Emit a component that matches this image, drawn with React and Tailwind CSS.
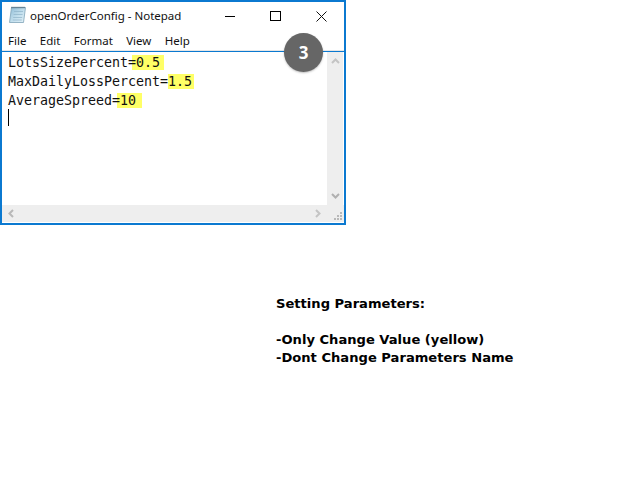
export default function App() {
  const mono = "font-['DejaVu_Sans_Mono',monospace] text-[13.3px] leading-[19px] text-[#111] h-[19px] whitespace-pre";
  return (
    <div className="relative w-[640px] h-[480px] bg-white overflow-hidden font-['Liberation_Sans',sans-serif]">
      <div className="relative w-[346px] h-[225px] border-2 border-[#0b79d0] flex flex-col bg-white">
        <div className="h-[28px] flex items-center shrink-0">
          <svg width="18" height="18" viewBox="0 0 18 18" className="ml-[7px] mr-[3px] mb-[3px]">
            <defs>
              <linearGradient id="pad" x1="0" y1="0" x2="1" y2="1">
                <stop offset="0" stopColor="#8fbcd6" />
                <stop offset="0.55" stopColor="#c4e0ee" />
                <stop offset="1" stopColor="#e4f1f7" />
              </linearGradient>
            </defs>
            <path d="M2.5 1.5 L16.5 1.5 L14.5 16.5 L0.5 16.5 Z" fill="url(#pad)" stroke="#7fa3b8" strokeWidth="0.8" />
            <path d="M5 5.5 H14 M4.6 8.5 H13.6 M4.2 11.5 H13.2 M3.8 14 H12.8" stroke="#8fb3c8" strokeWidth="0.7" />
            <path d="M2.5 1.5 H16.5" stroke="#3d5666" strokeWidth="1.6" strokeDasharray="1 1" />
          </svg>
          <span className="text-[11.5px] text-[#111] font-['Noto_Sans',sans-serif]">openOrderConfig - Notepad</span>
          <div className="ml-auto flex items-center">
            <div className="w-[46px] h-[28px] flex items-center justify-center pl-[2px]"><div className="w-[10px] h-px bg-black" /></div>
            <div className="w-[46px] h-[28px] flex items-center justify-center"><div className="w-[11px] h-[10px] border border-black" /></div>
            <div className="w-[46px] h-[28px] flex items-center justify-center">
              <svg width="11" height="11" viewBox="0 0 11 11"><path d="M0.5 0.5 L10.5 10.5 M10.5 0.5 L0.5 10.5" stroke="#111" strokeWidth="1" fill="none" /></svg>
            </div>
          </div>
        </div>
        <div className="h-[20px] flex items-center gap-[13.4px] pl-[6px] pt-[2px] text-[11.5px] text-[#111] font-['Noto_Sans',sans-serif] shrink-0">
          <span>File</span><span>Edit</span><span>Format</span><span>View</span><span>Help</span>
        </div>
        <div className="h-px bg-[#e6e6e6] shrink-0" />
        <div className="h-px bg-[#0b79d0] shrink-0" />
        <div className="flex-1 flex flex-col min-h-0">
          <div className="flex-1 flex min-h-0">
            <div className="flex-1 pl-[6px] pt-px">
              <div className={mono}><span className="relative z-10">LotsSizePercent=</span><span className="bg-[#ffff66] -ml-[4px] pl-[4px] pr-[4px]">0.5</span></div>
              <div className={mono}>MaxDailyLossPercent=<span className="bg-[#ffff66] pr-[2px]">1.5</span></div>
              <div className={mono}><span className="relative z-10">AverageSpreed=</span><span className="bg-[#ffff66] -ml-[3px] pl-[3px] pr-[6px]">10</span></div>
              <div className="w-px h-[17px] -mt-px bg-black" />
            </div>
            <div className="w-[16px] bg-[#eeeeee] flex flex-col items-center justify-between py-[6px] mr-px">
              <svg width="9" height="6" viewBox="0 0 9 6"><path d="M1 5 L4.5 1.5 L8 5" stroke="#c4c4c4" strokeWidth="2" fill="none" /></svg>
              <svg width="9" height="6" viewBox="0 0 9 6"><path d="M1 1 L4.5 4.5 L8 1" stroke="#b0b0b0" strokeWidth="2" fill="none" /></svg>
            </div>
          </div>
          <div className="h-[17px] bg-[#eeeeee] flex items-center shrink-0 pl-[6px] mb-px">
            <svg width="6" height="9" viewBox="0 0 6 9"><path d="M5 1 L1.5 4.5 L5 8" stroke="#b8b8b8" strokeWidth="2" fill="none" /></svg>
            <svg width="6" height="9" viewBox="0 0 6 9" className="ml-[301px]"><path d="M1 1 L4.5 4.5 L1 8" stroke="#c4c4c4" strokeWidth="2" fill="none" /></svg>
            <svg width="8" height="8" viewBox="0 0 8 8" className="ml-[13px] mt-[5px]">
              <path d="M6 0h2v2H6z M3 3h2v2H3z M6 3h2v2H6z M0 6h2v2H0z M3 6h2v2H3z M6 6h2v2H6z" fill="#b8b8b8" />
            </svg>
          </div>
        </div>
      </div>
      <div className="absolute left-[284px] top-[33px] w-[39px] h-[39px] rounded-full bg-[#666666] text-white flex items-center justify-center text-[17px] font-bold font-['Open_Sans',sans-serif] shadow-[0_1px_2px_rgba(0,0,0,0.25)] z-20">3</div>
      <div className="ml-[276px] mt-[70px] text-[13.1px] leading-[18px] font-bold text-black font-['DejaVu_Sans',sans-serif]">
        <div>Setting Parameters:</div>
        <div className="h-[18px]" />
        <div>-Only Change Value (yellow)</div>
        <div>-Dont Change Parameters Name</div>
      </div>
    </div>
  );
}
